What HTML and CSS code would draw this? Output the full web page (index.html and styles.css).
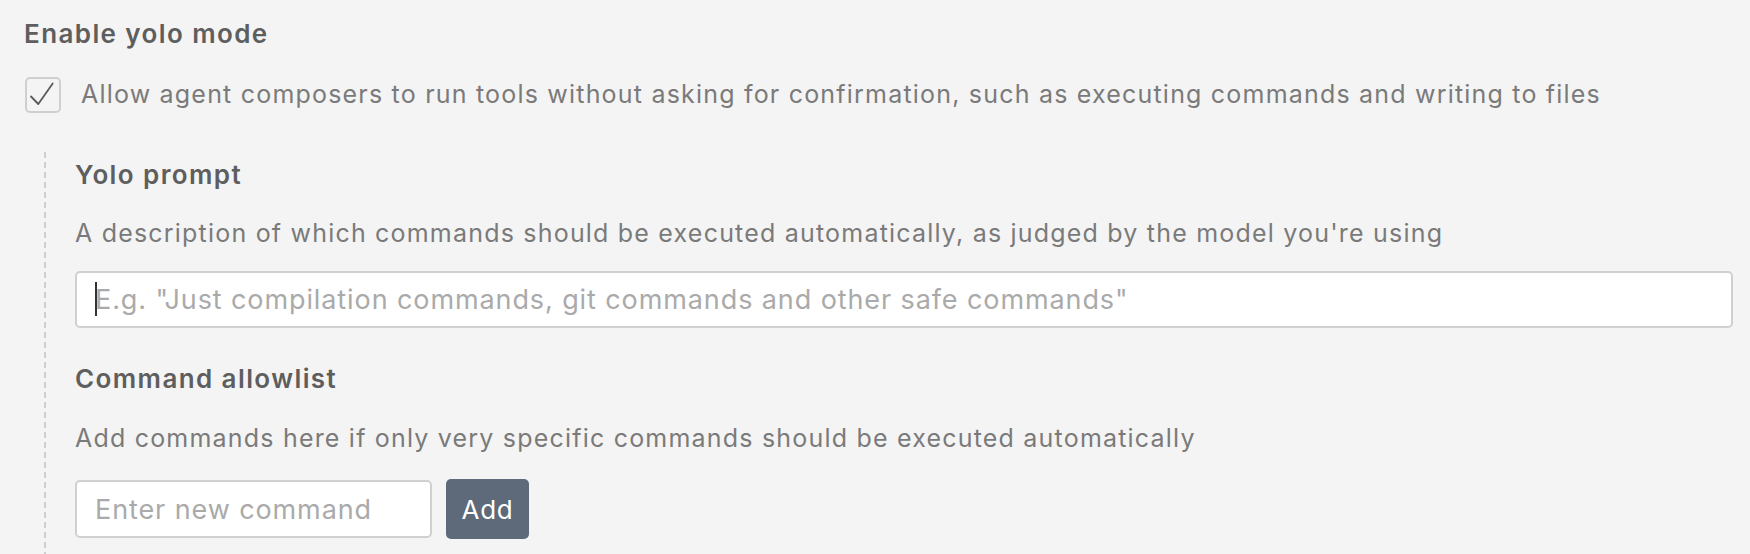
FILE: index.html
```html
<!DOCTYPE html>
<html lang="en">
<head>
<meta charset="utf-8">
<title>Enable yolo mode</title>
<link rel="stylesheet" href="styles.css">
</head>
<body>
<div class="page">
  <div class="setting-title">Enable yolo mode</div>
  <label class="check-row">
    <span class="checkbox">
      <svg width="36" height="36" viewBox="0 0 36 36"><path d="M6 19.5 L13.3 27 L27.7 6.5" fill="none" stroke="#5a5a5a" stroke-width="1.8" stroke-linecap="round" stroke-linejoin="round"/></svg>
    </span>
    <span class="check-text">Allow agent composers to run tools without asking for confirmation, such as executing commands and writing to files</span>
  </label>
  <div class="sub">
    <div class="sub-title first">Yolo prompt</div>
    <div class="desc">A description of which commands should be executed automatically, as judged by the model you're using</div>
    <div class="field">
      <input class="text-input wide" type="text" placeholder="E.g. &quot;Just compilation commands, git commands and other safe commands&quot;">
      <span class="caret"></span>
    </div>
    <div class="sub-title">Command allowlist</div>
    <div class="desc second">Add commands here if only very specific commands should be executed automatically</div>
    <div class="add-row">
      <input class="text-input narrow" type="text" placeholder="Enter new command">
      <button class="add-btn" type="button">Add</button>
    </div>
  </div>
</div>
</body>
</html>
```
FILE: styles.css
```css
html, body {
  margin: 0;
  padding: 0;
  background: #f4f4f4;
}
body {
  font-family: Inter, "Noto Sans", "Liberation Sans", sans-serif;
  width: 1750px;
  height: 554px;
  overflow: hidden;
}
.page {
  padding: 18px 17px 0 24px;
}
.setting-title {
  font-size: 26px;
  line-height: 32px;
  font-weight: 600;
  letter-spacing: 1.4px;
  color: #5e5e5e;
}
.check-row {
  display: flex;
  align-items: center;
  margin-top: 27px;
  gap: 20px;
}
.checkbox {
  width: 36px;
  height: 36px;
  box-sizing: border-box;
  border: 2px solid #cfcfcf;
  border-radius: 5px;
  display: flex;
  align-items: center;
  justify-content: center;
  flex: none;
  margin-left: 1px;
}
.checkbox svg {
  display: block;
  flex: none;
}
.check-text {
  font-size: 25px;
  line-height: 32px;
  letter-spacing: 1.2px;
  color: #7a7a7a;
  margin-top: -2px;
}
.sub {
  margin-top: 39px;
  margin-left: 20px;
  padding-left: 31px;
  padding-bottom: 20px;
  background-image: repeating-linear-gradient(to bottom, #cfcfcf 0 6px, transparent 6px 10px);
  background-size: 2px 100%;
  background-repeat: no-repeat;
  background-position: 0 0;
}
.sub-title {
  font-size: 26px;
  line-height: 32px;
  font-weight: 600;
  letter-spacing: 1.4px;
  color: #5e5e5e;
  padding-top: 35px;
}
.sub-title.first {
  padding-top: 7px;
}
.desc {
  font-size: 25px;
  line-height: 32px;
  letter-spacing: 1.2px;
  color: #7a7a7a;
  margin-top: 26px;
}
.field {
  position: relative;
  margin-top: 22px;
}
.text-input {
  display: block;
  box-sizing: border-box;
  border: 2px solid #d0d0d0;
  border-radius: 5px;
  background: #ffffff;
  font-family: Inter, "Noto Sans", "Liberation Sans", sans-serif;
  font-size: 27px;
  letter-spacing: 0.9px;
  color: #555;
  padding: 0 18px;
  outline: none;
  margin: 0;
}
.text-input::placeholder {
  color: #aaaaaa;
}
.text-input.wide {
  width: 1658px;
  height: 57px;
}
.caret {
  position: absolute;
  left: 20px;
  top: 11px;
  width: 2px;
  height: 34px;
  background: #333;
}
.desc.second {
  margin-top: 27px;
}
.add-row {
  display: flex;
  align-items: center;
  gap: 14px;
  margin-top: 25px;
}
.text-input.narrow {
  width: 357px;
  height: 58px;
}
.add-btn {
  width: 83px;
  height: 60px;
  border: none;
  border-radius: 5px;
  background: #5e6a79;
  color: #ffffff;
  font-family: Inter, "Noto Sans", "Liberation Sans", sans-serif;
  font-size: 26px;
  letter-spacing: 0.8px;
  padding: 0;
  margin: 0;
}
```
